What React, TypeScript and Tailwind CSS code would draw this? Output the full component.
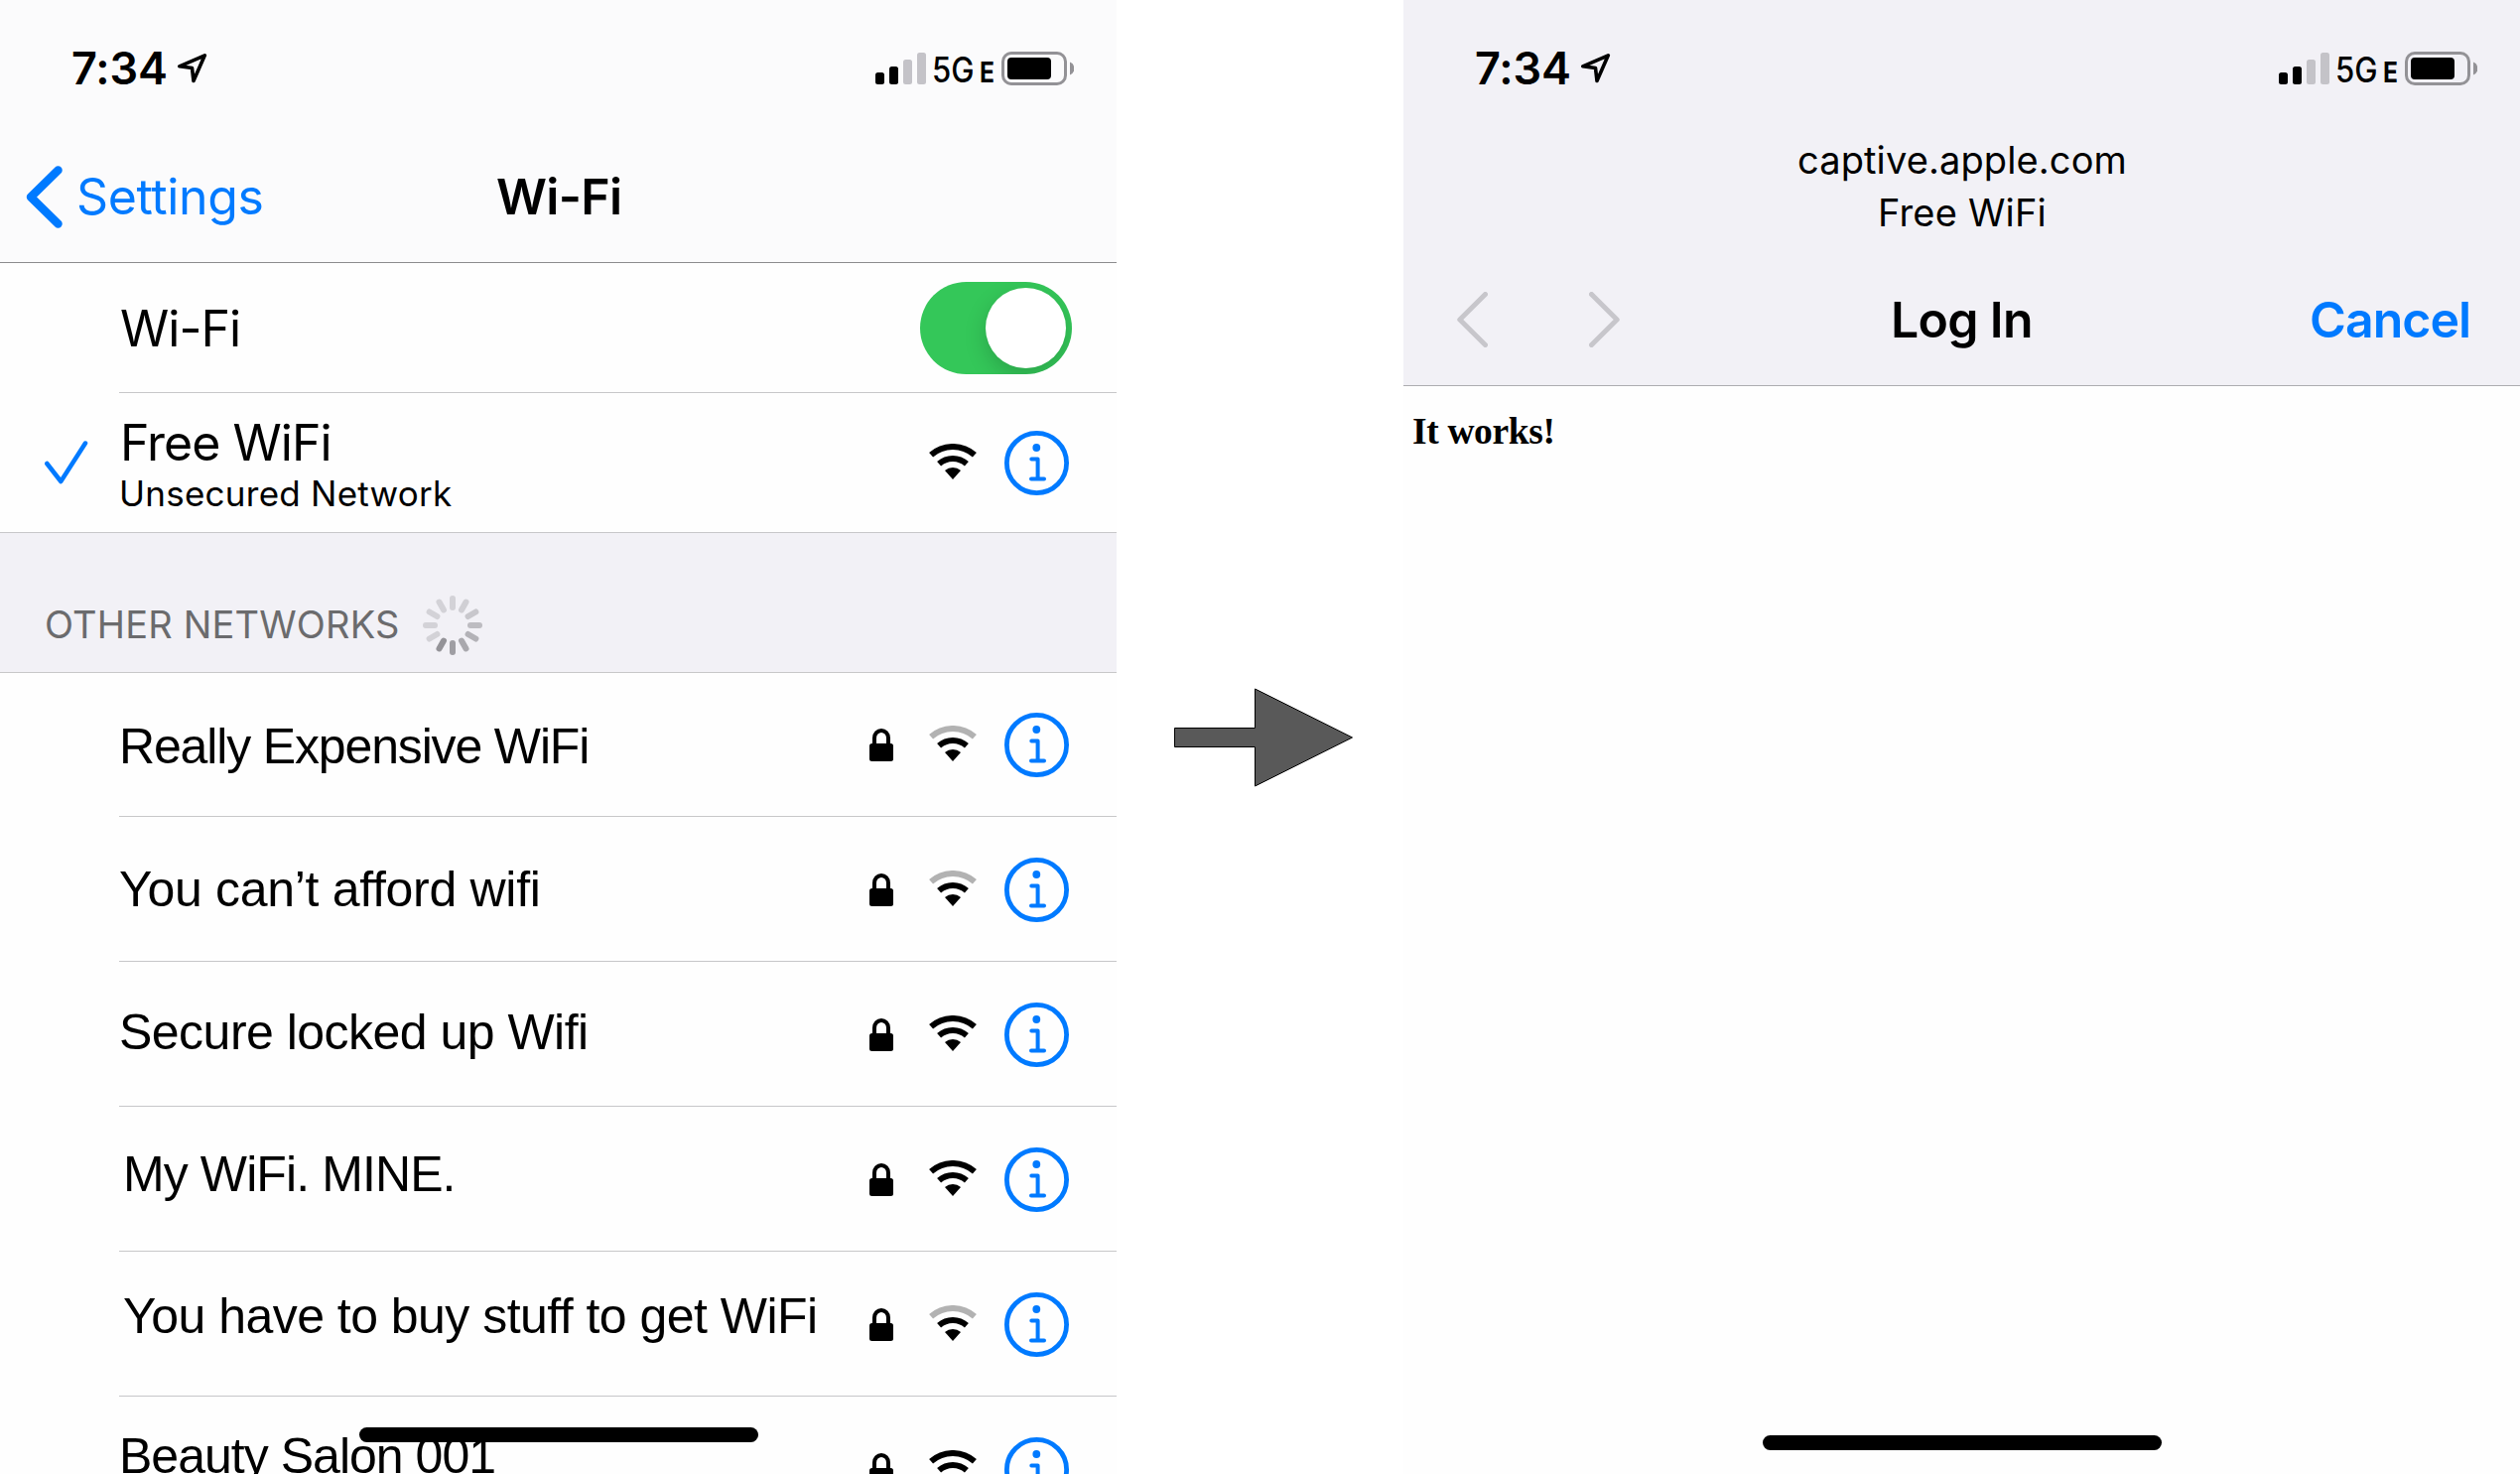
type Network = {
  name: string;
  weak?: boolean;
  row: string;
  label: string;
};

const NETWORKS: Network[] = [
  { name: "Really Expensive WiFi", weak: true, row: "h-[145px] pt-[40px]", label: "mt-[9px] tracking-[-1.15px]" },
  { name: "You can’t afford wifi", weak: true, row: "h-[146px] pt-[41px]", label: "mt-[7px] tracking-[-0.3px]" },
  { name: "Secure locked up Wifi", row: "h-[146px] pt-[41px]", label: "mt-[5px] tracking-[-0.52px]" },
  { name: "My WiFi. MINE.", row: "h-[146px] pt-[41px]", label: "mt-[2px] ml-[4px] tracking-[-0.9px]" },
  { name: "You have to buy stuff to get WiFi", weak: true, row: "h-[146px] pt-[41px]", label: "-mt-px ml-[4px] tracking-[-0.53px]" },
  { name: "Beauty Salon 001", row: "h-[146px] pt-[41px]", label: "-mt-[6px] tracking-[-0.98px]" },
];

const SPOKES = [
  "#d3d2d7", "#d0cfd4", "#c8c7cc", "#bdbcc1", "#b3b2b7", "#a9a8ad",
  "#9f9ea3", "#949398", "#d3d2d7", "#d3d2d7", "#d3d2d7", "#d3d2d7",
];

function LocationIcon() {
  return (
    <svg className="mt-[7px] ml-[12px] h-[32px] w-[31px] shrink-0" viewBox="0 0 31 32" fill="none" stroke="#000" strokeWidth="3.600" strokeLinejoin="round">
      <path d="M27.300 2.800 1.800 13.800 14.500 15.500 16 28.500Z" />
    </svg>
  );
}

function StatusBar() {
  return (
    <div className="flex h-[120px] items-start pt-[46px] pl-[72px]">
      <span className="w-[95px] text-[45px] leading-none font-semibold tracking-[-0.13px]">7:34</span>
      <LocationIcon />
      <svg className="mt-[7px] ml-auto h-[32px] w-[51px] shrink-0" viewBox="0 0 51 32">
        <rect x="0" y="20" width="9" height="12" rx="2.5" />
        <rect x="14" y="14" width="9" height="18" rx="2.5" />
        <rect x="28" y="7" width="9" height="25" rx="2.5" fill="#c4c3c8" />
        <rect x="42" y="0" width="9" height="32" rx="2.5" fill="#c4c3c8" />
      </svg>
      <span className="mt-[7px] ml-[6px] w-[48px] origin-left scale-x-[0.89] text-[35px] leading-none font-medium">5G</span>
      <span className="mt-[13px] w-[22px] origin-left scale-x-[0.88] text-[28px] leading-none font-bold">E</span>
      <svg className="mt-[6px] mr-[43px] h-[34px] w-[73px] shrink-0" viewBox="0 0 73 34">
        <rect x="1.5" y="1.5" width="63" height="31" rx="8.5" fill="none" stroke="#939296" strokeWidth="3" />
        <rect x="6" y="6" width="44" height="22" rx="4" />
        <path d="M69 10.5a7 7 0 0 1 0 13Z" fill="#939296" />
      </svg>
    </div>
  );
}

function WifiIcon({ weak = false }: { weak?: boolean }) {
  return (
    <svg className="mt-[13px] h-[36px] w-[48px] shrink-0" viewBox="0 0 48 36" fill="none" strokeWidth="6">
      <path d="M2.1 11.3a33 33 0 0 1 43.8 0" stroke={weak ? "#b2b2b2" : "#000"} />
      <path d="M10.1 20.3a21 21 0 0 1 27.8 0" stroke="#000" />
      <path d="M24 36 16 27a12 12 0 0 1 16 0Z" fill="#000" />
    </svg>
  );
}

function InfoIcon() {
  return (
    <svg className="mr-[48px] ml-[28px] size-[65px] shrink-0" viewBox="0 0 65 65" fill="none" stroke="#007aff" strokeLinecap="round" strokeLinejoin="round">
      <circle cx="32.5" cy="32.5" r="30.1" strokeWidth="4.8" />
      <circle cx="32.3" cy="17" r="3.9" fill="#007aff" stroke="none" />
      <path d="M27.3 28.6h6.3v20M27 48.6h13" strokeWidth="4" />
    </svg>
  );
}

function LockIcon() {
  return (
    <svg className="mt-[16px] mr-[36px] ml-auto h-[33px] w-[24px] shrink-0" viewBox="0 0 24 33">
      <path d="M5 18v-8.500a7 7.500 0 0 1 14 0V18" fill="none" stroke="#000" strokeWidth="4" />
      <rect y="15" width="24" height="18" rx="2.5" />
    </svg>
  );
}

function Spinner() {
  return (
    <svg className="mt-[63px] size-[60px]" viewBox="0 0 60 60">
      {SPOKES.map((color, i) => (
        <rect key={i} x="27" y="0" width="6" height="15" rx="3" fill={color} transform={`rotate(${i * 30} 30 30)`} />
      ))}
    </svg>
  );
}

function SettingsPhone() {
  return (
    <section className="relative flex h-full w-[1125px] shrink-0 flex-col overflow-hidden bg-[#fefefe]">
      <header className="h-[265px] shrink-0 border-b border-[#8c8c8e] bg-[#fbfbfc]">
        <StatusBar />
        <div className="grid grid-cols-[500px_1fr]">
          <div className="flex items-start text-[#007aff]">
            <svg className="mt-[47px] ml-[26px] h-[63px] w-[38px]" viewBox="0 0 38 63" fill="none" stroke="currentColor" strokeWidth="8.500" strokeLinecap="round" strokeLinejoin="round">
              <path d="M32.500 4.500 5 31.500l27.500 27" />
            </svg>
            <span className="mt-[53px] ml-[13px] text-[50px] leading-none tracking-[-0.35px]">Settings</span>
          </div>
          <h1 className="mt-[53px] text-[50px] leading-none font-semibold tracking-[-0.69px]">Wi-Fi</h1>
        </div>
      </header>

      <div className="ml-[120px] flex h-[131px] shrink-0 items-start justify-between border-b border-[#c7c7c9]">
        <span className="mt-[41px] ml-[1px] text-[50px] leading-none tracking-[-1px]">Wi-Fi</span>
        <div className="mt-[19px] mr-[45px] flex h-[93px] w-[153px] justify-end overflow-hidden rounded-full bg-[#34c759] p-[6px]">
          <div className="size-[81px] rounded-full bg-white shadow-[0_8px_22px_rgba(0,0,0,0.18)]" />
        </div>
      </div>

      <div className="flex h-[141px] shrink-0 items-start border-b border-[#c7c7c9]">
        <svg className="mt-[48px] ml-[45px] h-[44px] w-[44px] shrink-0" viewBox="0 0 44 44" fill="none" stroke="#007aff" strokeWidth="4.500" strokeLinecap="round" strokeLinejoin="round">
          <path d="M2.300 23 16.300 41 41 2.500" />
        </svg>
        <div className="ml-[32px] flex flex-col pt-[25px]">
          <span className="text-[50px] leading-none tracking-[-0.98px]">Free WiFi</span>
          <span className="mt-[9px] -ml-px text-[35px] leading-none tracking-[0.25px]">Unsecured Network</span>
        </div>
        <div className="ml-auto flex items-start pt-[38px]">
          <WifiIcon />
          <InfoIcon />
        </div>
      </div>

      <div className="flex h-[141px] shrink-0 items-start border-b border-[#c7c7c9] bg-[#f2f1f6] pl-[45px]">
        <span className="mt-[73px] w-[381px] text-[38px] leading-none tracking-[0.17px] text-[#6b6b6d]">OTHER NETWORKS</span>
        <Spinner />
      </div>

      {NETWORKS.map((n) => (
        <div key={n.name} className={`ml-[120px] flex shrink-0 items-start border-b border-[#c7c7c9] ${n.row}`}>
          <span className={`font-['Liberation_Sans',sans-serif] text-[50px] leading-none whitespace-nowrap ${n.label}`}>{n.name}</span>
          <LockIcon />
          <WifiIcon weak={n.weak} />
          <InfoIcon />
        </div>
      ))}

      <div className="absolute top-[1438px] left-[362px] h-[15px] w-[402px] rounded-full bg-black" />
    </section>
  );
}

function LoginPhone() {
  return (
    <section className="relative flex h-full w-[1125px] shrink-0 flex-col overflow-hidden bg-[#fefefe]">
      <header className="h-[389px] shrink-0 border-b border-[#adadb0] bg-[#f2f1f6]">
        <StatusBar />
        <div className="flex h-[174px] flex-col items-center pt-[15px] pl-px text-[38px] leading-[53px]">
          <span className="tracking-[0.11px]">captive.apple.com</span>
          <span className="tracking-[0.19px]">Free WiFi</span>
        </div>
        <div className="grid grid-cols-[491px_422px_1fr]">
          <div className="flex items-start gap-[102px] pl-[54px]">
            <svg className="h-[56px] w-[31px]" viewBox="0 0 31 56" fill="none" stroke="#c7c6cb" strokeWidth="5" strokeLinecap="round" strokeLinejoin="round">
              <path d="M28.500 2.500 2.800 28l25.700 25.500" />
            </svg>
            <svg className="h-[56px] w-[31px]" viewBox="0 0 31 56" fill="none" stroke="#c7c6cb" strokeWidth="5" strokeLinecap="round" strokeLinejoin="round">
              <path d="M2.500 2.500 28.200 28 2.500 53.500" />
            </svg>
          </div>
          <h1 className="mt-[3px] text-[50px] leading-none font-semibold tracking-[-0.69px]">Log In</h1>
          <span className="mt-[3px] text-[50px] leading-none font-semibold tracking-[-0.95px] text-[#007aff]">Cancel</span>
        </div>
      </header>
      <p className="mt-[27px] ml-[9px] font-['Liberation_Serif',serif] text-[37.5px] leading-none font-bold tracking-[-0.36px]">It works!</p>
      <div className="absolute top-[1446px] left-[362px] h-[15px] w-[402px] rounded-full bg-black" />
    </section>
  );
}

export default function App() {
  return (
    <main className="flex h-[1485px] w-[2539px] overflow-hidden bg-white font-['Inter',sans-serif] text-black">
      <SettingsPhone />
      <div className="w-[289px] shrink-0">
        <svg className="mt-[693px] ml-[58px] h-[100px] w-[182px]" viewBox="0 0 182 100">
          <path d="M.5 40.500h81V1l98 49-98 49V59.500H.5Z" fill="#595959" stroke="#000" />
        </svg>
      </div>
      <LoginPhone />
    </main>
  );
}
